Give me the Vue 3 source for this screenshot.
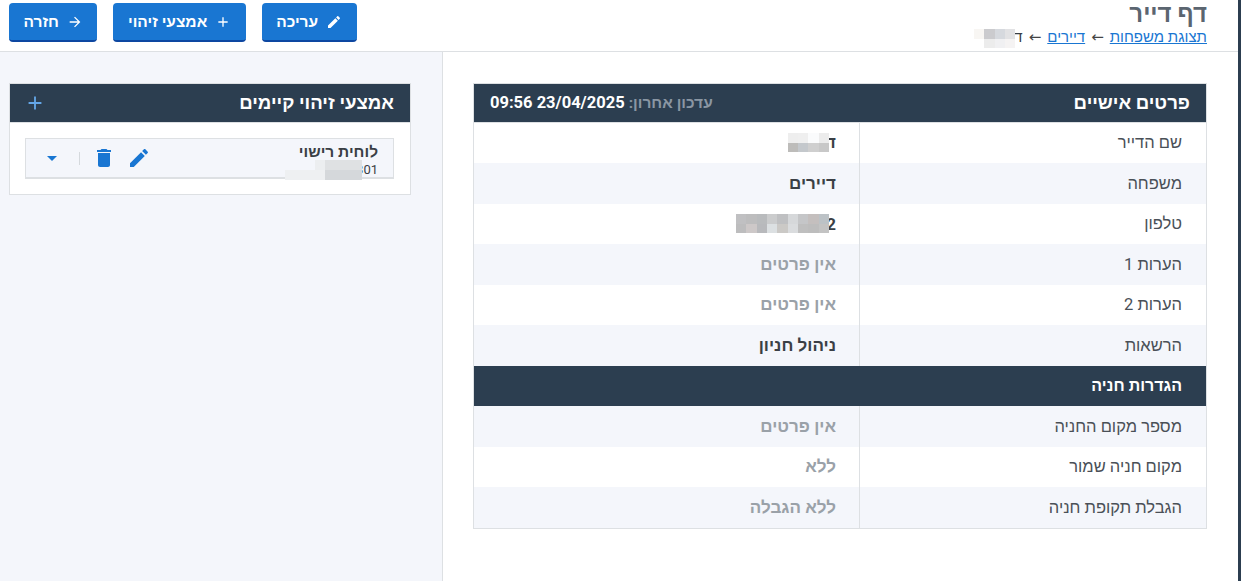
<script setup>
const rows = [
  { label: 'שם הדייר', value: 'ד', mosaic: 'name' },
  { label: 'משפחה', value: 'דיירים', alt: true },
  { label: 'טלפון', value: '2', mosaic: 'phone' },
  { label: 'הערות 1', value: 'אין פרטים', muted: true, alt: true },
  { label: 'הערות 2', value: 'אין פרטים', muted: true },
  { label: 'הרשאות', value: 'ניהול חניון', alt: true },
  { section: 'הגדרות חניה' },
  { label: 'מספר מקום החניה', value: 'אין פרטים', muted: true, alt: true },
  { label: 'מקום חניה שמור', value: 'ללא', muted: true },
  { label: 'הגבלת תקופת חניה', value: 'ללא הגבלה', muted: true, alt: true },
]

// Redacted areas of the original, listed right to left, row by row
const mosaics = {
  crumb: [
    ['#e2e2e4', '#d6d9de', '#cbcbce', '#f8f6f3'],
    ['#f5f3f3', '#f0f0f2', '#ececec', '#ffffff'],
  ],
  name: [
    ['#ececec', '#fafbfc', '#efefef', '#eeeeee'],
    ['#c8c8c8', '#cfcfcf', '#c4c8cc', '#bdbcba'],
  ],
  phone: [
    ['#bcc2c6', '#c4bfbe', '#c5c6c8', '#d6d8da', '#bfc0c2', '#cbcccd', '#b9bbbd', '#bdbdbe', '#c0c0c2'],
    ['#c3c3c3', '#bdbdbd', '#bfbfbf', '#dadcde', '#cbc9c6', '#dce0e2', '#b8b9bc', '#cdc8c8', '#bdbdbe'],
  ],
}
</script>

<template>
  <div class="page">
    <div class="shell">
      <header class="topbar">
        <div class="titles">
          <h1>דף דייר</h1>
          <nav class="crumbs">
            <a href="#">תצוגת משפחות</a>
            <span class="sep">←</span>
            <a href="#">דיירים</a>
            <span class="sep">←</span>
            <span class="crumb-last">ד<span class="mosaic crumb-mosaic">
              <span v-for="(row, r) in mosaics.crumb" :key="r" class="mosaic-row">
                <i v-for="(c, k) in row" :key="k" :style="{ background: c }"></i>
              </span>
            </span></span>
          </nav>
        </div>
        <div class="actions">
          <button class="btn">
            <svg viewBox="0 0 24 24"><path d="M3 17.25V21h3.75L17.81 9.94l-3.75-3.75L3 17.25zM20.71 7.04c.39-.39.39-1.02 0-1.41l-2.34-2.34c-.39-.39-1.02-.39-1.41 0l-1.83 1.83 3.75 3.75 1.83-1.83z"/></svg>
            <span>עריכה</span>
          </button>
          <button class="btn">
            <svg viewBox="0 0 24 24"><path d="M19 13h-6v6h-2v-6H5v-2h6V5h2v6h6v2z"/></svg>
            <span>אמצעי זיהוי</span>
          </button>
          <button class="btn">
            <svg viewBox="0 0 24 24"><path d="M12 4l-1.41 1.41L16.17 11H4v2h12.17l-5.58 5.59L12 20l8-8z"/></svg>
            <span>חזרה</span>
          </button>
        </div>
      </header>

      <main class="body">
        <section class="details">
          <div class="card">
            <div class="card-head">
              <h2>פרטים אישיים</h2>
              <div class="updated"><span>עדכון אחרון:</span> <b>23/04/2025 09:56</b></div>
            </div>
            <template v-for="row in rows" :key="row.label || row.section">
              <div v-if="row.section" class="section-row">{{ row.section }}</div>
              <div v-else class="row" :class="{ alt: row.alt }">
                <div class="label">{{ row.label }}</div>
                <div class="value" :class="{ muted: row.muted }">
                  {{ row.value }}<span v-if="row.mosaic" class="mosaic">
                    <span v-for="(line, r) in mosaics[row.mosaic]" :key="r" class="mosaic-row">
                      <i v-for="(c, k) in line" :key="k" :style="{ background: c }"></i>
                    </span>
                  </span>
                </div>
              </div>
            </template>
          </div>
        </section>

        <aside class="side">
          <div class="side-card">
            <div class="side-head">
              <h2>אמצעי זיהוי קיימים</h2>
              <svg viewBox="0 0 24 24"><path d="M19 13h-6v6h-2v-6H5v-2h6V5h2v6h6v2z"/></svg>
            </div>
            <div class="side-body">
              <div class="item">
                <div class="item-text">
                  <div class="item-title">לוחית רישוי</div>
                  <div class="item-num">301</div>
                  <span class="plate-blur"></span>
                </div>
                <div class="item-tools">
                  <svg class="tool-edit" viewBox="0 0 24 24"><path d="M3 17.25V21h3.75L17.81 9.94l-3.75-3.75L3 17.25zM20.71 7.04c.39-.39.39-1.02 0-1.41l-2.34-2.34c-.39-.39-1.02-.39-1.41 0l-1.83 1.83 3.75 3.75 1.83-1.83z"/></svg>
                  <svg class="tool-del" viewBox="0 0 24 24"><path d="M6 19c0 1.1.9 2 2 2h8c1.1 0 2-.9 2-2V7H6v12zM19 4h-3.5l-1-1h-5l-1 1H5v2h14V4z"/></svg>
                  <span class="tool-sep"></span>
                  <svg class="tool-drop" viewBox="0 0 24 24"><path d="M7 10l5 5 5-5z"/></svg>
                </div>
              </div>
            </div>
          </div>
        </aside>
      </main>
    </div>
  </div>
</template>

<style scoped>
.page {
  height: 581px;
  background: #2c3e50;
  padding-right: 3px;
  box-sizing: border-box;
  direction: rtl;
  font-family: Roboto, "Noto Sans", "Liberation Sans", sans-serif;
  color: #3a3f45;
  overflow: hidden;
}
.shell {
  height: 100%;
  display: flex;
  flex-direction: column;
  background: #fff;
}
.topbar {
  height: 52px;
  box-sizing: border-box;
  flex: none;
  display: flex;
  justify-content: space-between;
  align-items: flex-start;
  padding: 0 31px 0 9px;
  border-bottom: 1px solid #dde0e3;
}
.titles h1 {
  margin: 0;
  font-size: 24px;
  line-height: 28px;
  font-weight: 700;
  color: #5b6570;
}
.crumbs {
  font-size: 15px;
  line-height: 18px;
  display: flex;
  gap: 6px;
  white-space: nowrap;
}
.crumbs a {
  color: #1976d2;
}
.sep {
  color: #444;
  font-family: "DejaVu Sans", sans-serif;
}
.crumb-last {
  display: flex;
}
.crumb-mosaic {
  margin-top: 1px;
  margin-right: -1px;
  height: 18px;
}
.actions {
  display: flex;
  flex-direction: row;
  gap: 16px;
  padding-top: 3px;
}
.btn {
  height: 39px;
  padding: 0 14.5px;
  display: flex;
  align-items: center;
  gap: 8px;
  border: 0;
  border-bottom: 2px solid #0d47a1;
  border-radius: 4px;
  background: #1976d2;
  color: #fff;
  font: 700 15.5px Roboto, "Noto Sans", "Liberation Sans", sans-serif;
}
.btn svg {
  width: 16px;
  height: 16px;
  fill: #fff;
}
.body {
  flex: 1;
  display: flex;
  min-height: 0;
}
.details {
  flex: 1;
  padding: 31px 31px 0 30px;
}
.card {
  border: 1px solid #dde0e3;
}
.card-head {
  height: 37.5px;
  border-bottom: 1px solid #dde0e3;
  background: #2c3e50;
  display: flex;
  justify-content: space-between;
  align-items: center;
  padding: 0 16px;
  color: #fff;
}
.card-head h2,
.side-head h2 {
  margin: 0;
  font-size: 18.6px;
  font-weight: 700;
}
.updated {
  font-size: 16.5px;
  color: #8a96a3;
  font-weight: 500;
}
.updated span {
  font-size: 15.5px;
  font-weight: 700;
}
.updated b {
  color: #fff;
  font-weight: 700;
}
.row {
  height: 40.5px;
  display: flex;
  align-items: center;
  font-size: 16.5px;
  background: #fff;
}
.row.alt {
  background: #f4f6fb;
}
.label {
  width: 347px;
  height: 100%;
  box-sizing: border-box;
  padding-right: 24px;
  display: flex;
  align-items: center;
  border-left: 1px solid #dde0e3;
  color: #4a5057;
}
.value {
  flex: 1;
  padding-right: 23px;
  font-size: 17px;
  font-weight: 700;
  display: flex;
  align-items: center;
}
.value .mosaic {
  margin-right: -3px;
}
.muted {
  color: #9aa1a8;
}
.section-row {
  height: 40.5px;
  box-sizing: border-box;
  display: flex;
  align-items: center;
  padding-right: 24px;
  background: #2c3e50;
  color: #fff;
  font-size: 16px;
  font-weight: 700;
}
.mosaic {
  display: inline-flex;
  flex-direction: column;
  height: 19px;
}
.mosaic-row {
  display: flex;
  flex: 1;
}
.mosaic-row i {
  display: block;
  width: 10.4px;
}
.side {
  width: 443px;
  box-sizing: border-box;
  flex: none;
  background: #f4f6fb;
  border-right: 1px solid #dde0e3;
  padding: 31px 31px 0 9px;
}
.side-card {
  border: 1px solid #dde0e3;
  background: #fff;
  height: 112px;
  box-sizing: border-box;
}
.side-head {
  height: 38px;
  background: #2c3e50;
  border-bottom: 1px solid #dde0e3;
  display: flex;
  justify-content: space-between;
  align-items: center;
  padding: 0 16px 0 0;
  color: #fff;
}
.side-head svg {
  width: 22px;
  height: 22px;
  fill: #64a6e8;
  margin-left: 14px;
}
.side-body {
  padding: 15px 16px 0 15px;
}
.item {
  height: 41px;
  box-sizing: border-box;
  background: #f4f6fb;
  border: 1px solid #dde0e3;
  border-bottom-width: 2px;
  display: flex;
  justify-content: space-between;
  padding: 0 15px 0 14px;
}
.item-text {
  position: relative;
  color: #3a3f45;
}
.item-title {
  font-size: 15.5px;
  font-weight: 700;
  line-height: 22px;
  padding-top: 2px;
}
.item-num {
  font-size: 13px;
  line-height: 14px;
}
.plate-blur {
  position: absolute;
  top: 21px;
  right: 16px;
  width: 77px;
  height: 20px;
  background:
    linear-gradient(to left, #d5d8db 37px, #eef0f2 37px) bottom / 100% 50% no-repeat,
    linear-gradient(to left, #dfe1e3 37px, #eceef0 37px, #eceef0 47px, transparent 47px) top / 100% 50% no-repeat;
}
.item-tools {
  display: flex;
  align-items: center;
  gap: 0;
}
.item-tools svg {
  fill: #1976d2;
}
.tool-edit {
  width: 24px;
  height: 24px;
  margin-left: 11px;
}
.tool-del {
  width: 24px;
  height: 24px;
  margin-left: 12px;
}
.tool-sep {
  width: 1px;
  height: 13px;
  background: #d5d9dd;
  margin-left: 15px;
}
.tool-drop {
  width: 24px;
  height: 24px;
}
</style>
